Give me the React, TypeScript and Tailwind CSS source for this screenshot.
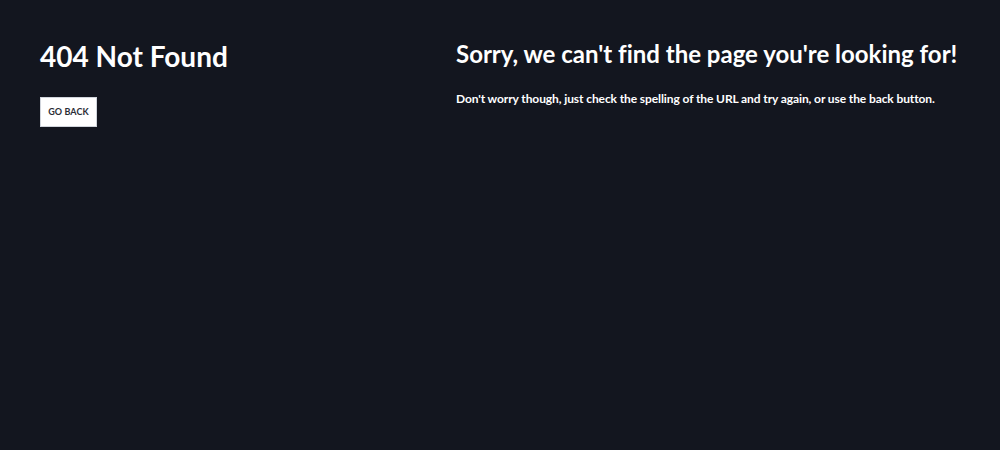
export default function App() {
  return (
    <div
      className="min-h-[450px] w-full bg-[#13161f] text-white [font-variant-ligatures:none]"
      style={{ fontFamily: 'Lato, "Noto Sans", sans-serif' }}
    >
      <div className="flex px-10 pt-9">
        {/* Left column */}
        <div className="w-[416px] shrink-0 pt-[3px]">
          <h1 className="text-[28px] leading-[34px] font-bold">404 Not Found</h1>
          <button className="mt-[24px] flex h-[30px] w-[57px] items-center justify-center bg-white border border-gray-300 text-[#2a2d36] text-[9px] font-bold tracking-[0.1px] uppercase">
            Go back
          </button>
        </div>

        {/* Right column */}
        <div className="flex-1 pt-[3px]">
          <h2 className="text-[24px] leading-[29px] font-bold">
            Sorry, we can't find the page you're looking for!
          </h2>
          <p className="mt-[23px] text-[12px] leading-[16px] font-bold tracking-[-0.1px]">
            Don't worry though, just check the spelling of the URL and try again, or use the back button.
          </p>
        </div>
      </div>
    </div>
  )
}
